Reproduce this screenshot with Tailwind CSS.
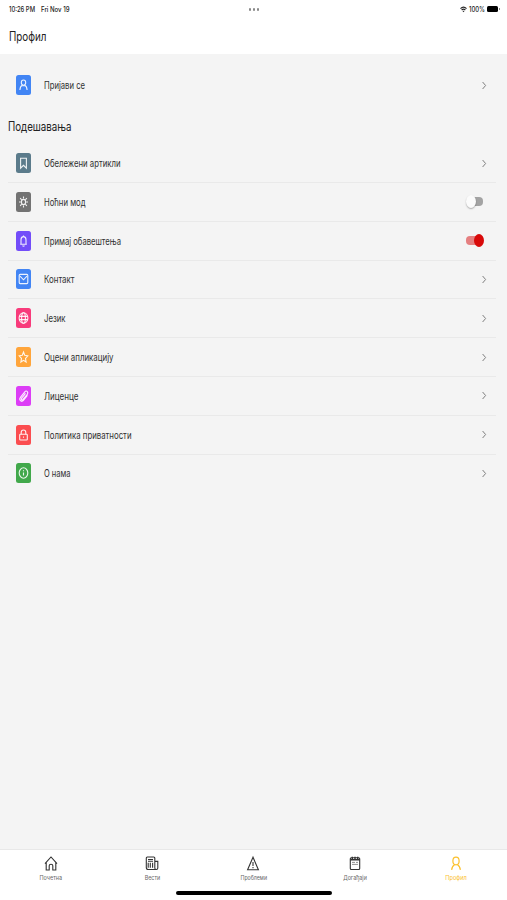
<!DOCTYPE html>
<html lang="sr">
<head>
<meta charset="utf-8">
<title>Профил</title>
<script src="https://cdn.jsdelivr.net/npm/@tailwindcss/browser@4"></script>
</head>
<body class="w-[507px] h-[900px] overflow-hidden bg-[#f4f4f4] font-['Inter','Roboto',sans-serif] text-[#303030] flex flex-col">
<header class="bg-white h-[54px] shrink-0">
  <div class="h-[18px] flex items-center text-[7.3px] font-medium text-[#222] pl-[9px] relative">
    <svg class="w-[32px] h-[12px] fill-current overflow-visible"><text y="8.7" textLength="26" lengthAdjust="spacingAndGlyphs">10:26 PM</text></svg>
    <svg class="w-[38px] h-[12px] fill-current overflow-visible"><text y="8.7" textLength="28.5" lengthAdjust="spacingAndGlyphs">Fri Nov 19</text></svg>
    <div class="absolute left-[248.5px] top-[8px] flex gap-[1.5px]"><i class="w-[2.5px] h-[3px] rounded-full bg-[#888]"></i><i class="w-[2.5px] h-[3px] rounded-full bg-[#888]"></i><i class="w-[2.5px] h-[3px] rounded-full bg-[#888]"></i></div>
    <div class="absolute left-[460px] top-0 h-[18px] flex items-center">
      <svg class="w-[7px] h-[7px]" viewBox="0 0 14 14" fill="none" stroke="#222" stroke-width="2.3"><path d="M1 5.2Q7-.8 13 5.2M3.3 8Q7 4.3 10.7 8"/><path d="M5 10.2Q7 8.5 9 10.2L7 12.5Z" fill="#222" stroke="none"/></svg>
      <svg class="w-[18px] h-[12px] ml-[2px] fill-current overflow-visible"><text y="8.7" textLength="16" lengthAdjust="spacingAndGlyphs">100%</text></svg>
      <i class="w-[11px] h-[6.5px] rounded-[1.5px] bg-black"></i><i class="w-px h-[2px] ml-[.5px] bg-[#888]"></i>
    </div>
  </div>
  <h1 class="pl-[9px] h-[36px] pt-[8px] text-[12.8px] text-[#222]"><svg class="w-[60px] h-[20px] fill-current overflow-visible"><text y="14.5" textLength="37.5" lengthAdjust="spacingAndGlyphs">Профил</text></svg></h1>
</header>
<main class="flex-1 pl-[8px] pr-[11px]">
  <div id="login" class="h-[51px] pt-[12.3px]"></div>
  <h2 class="h-[39.2px] pt-[11px] text-[12.8px] text-[#222]"><svg class="w-[90px] h-[20px] fill-current overflow-visible"><text y="14.9" textLength="63.5" lengthAdjust="spacingAndGlyphs">Подешавања</text></svg></h2>
  <div id="list"></div>
</main>
<nav class="h-[51px] shrink-0 bg-white border-t border-[#e8e8e8]">
  <div class="grid grid-cols-5 h-[36px] text-[6.4px] text-[#666]">
    <div class="flex flex-col items-center pt-[5px]"><svg class="w-[14px] h-[17px]" viewBox="0 0 14 17" fill="none" stroke="#333" stroke-width="1.1"><path d="M1 8.7L7 2l6 6.7M2.2 7.6V15h3v-4.3q0-1.5 1.8-1.5t1.8 1.5V15h3V7.6"/></svg><svg class="w-[23px] h-[10px] fill-current overflow-visible"><text x=".5" y="8.3" textLength="22.5" lengthAdjust="spacingAndGlyphs">Почетна</text></svg></div>
    <div class="flex flex-col items-center pt-[5px]"><svg class="w-[14px] h-[17px]" viewBox="0 0 14 17" fill="none" stroke="#333" stroke-width="1.1"><path d="M9.8 6.2V3q0-1-1-1H2.3q-1 0-1 1v9.5q0 2 2 2h8q1.5 0 1.5-1.5V6.4H9.8V13q0 1.5 1.5 1.5M3 4.5h5M3 6.2h5M3.2 7.7v5M5.3 7.7v5M7.6 7.7v5"/></svg><svg class="w-[16px] h-[10px] fill-current overflow-visible"><text x=".7" y="8.3" textLength="15.5" lengthAdjust="spacingAndGlyphs">Вести</text></svg></div>
    <div class="flex flex-col items-center pt-[5px]"><svg class="w-[14px] h-[17px]" viewBox="0 0 14 17" fill="none" stroke="#333" stroke-width="1.1"><path d="M7 2.2L1.6 14.8h10.8ZM7 7v4M7 12v1.2"/></svg><svg class="w-[27px] h-[10px] fill-current overflow-visible"><text x=".5" y="8.3" textLength="26.5" lengthAdjust="spacingAndGlyphs">Проблеми</text></svg></div>
    <div class="flex flex-col items-center pt-[5px]"><svg class="w-[14px] h-[17px]" viewBox="0 0 14 17" fill="none" stroke="#333" stroke-width="1.1"><rect x="2.3" y="2.7" width="9.4" height="11.8" rx="1"/><path d="M2.3 4.8h9.4M4.3 1.7v2.5M7 1.7v2.5M9.7 1.7v2.5" stroke-width="1.4"/><path d="M4 7.4h3M8 7.4h2M4 9.4h6" stroke="#777" stroke-width=".8"/></svg><svg class="w-[24px] h-[10px] fill-current overflow-visible"><text x=".3" y="8.3" textLength="23.5" lengthAdjust="spacingAndGlyphs">Догађаји</text></svg></div>
    <div class="flex flex-col items-center pt-[5px] text-[#fbc02d]"><svg class="w-[14px] h-[17px]" viewBox="0 0 14 17" fill="none" stroke="currentColor" stroke-width="1.2"><ellipse cx="7" cy="6" rx="3.1" ry="3.8"/><path d="M2.6 14.8q.6-4 3-5.1M11.4 14.8q-.6-4-3-5.1"/></svg><svg class="w-[22px] h-[10px] fill-current overflow-visible"><text x=".3" y="8.3" textLength="21.5" lengthAdjust="spacingAndGlyphs">Профил</text></svg></div>
  </div>
  <div class="mx-auto mt-[5px] w-[156px] h-[4px] rounded-full bg-black"></div>
</nav>
<script>
const icons = {
  user: '<ellipse cx="7.5" cy="7.6" rx="2.2" ry="2.6"/><path d="M3.9 15q.3-3.7 2.3-4.7M11.1 15q-.3-3.7-2.3-4.7M5.6 10.7h3.8"/>',
  mark: '<path d="M4.6 5.2h5.8v10L7.5 12.3 4.6 15.2Z"/>',
  sun: '<ellipse cx="7.5" cy="10" rx="2.1" ry="2.6"/><path d="M7.5 4.6v2M7.5 13.4v2M3 10h1.8M10.2 10H12M4.2 6l1.4 1.8M10.8 6L9.4 7.8M4.2 14l1.4-1.8M10.8 14l-1.4-1.8"/>',
  bell: '<path d="M4.2 13.2h6.6M5 13V8.8Q5 5.6 7.5 5.6T10 8.8V13M7.5 4.4v1.2M6.5 14.6q1 1.2 2 0"/>',
  mail: '<rect x="3.2" y="5.4" width="8.6" height="9.2" rx="1"/><path d="M4 7.2l3.5 3.6L11 7.2"/>',
  globe: '<ellipse cx="7.5" cy="10" rx="4.4" ry="5.3"/><ellipse cx="7.5" cy="10" rx="1.9" ry="5.3"/><path d="M3.3 8.4h8.4M3.3 11.6h8.4"/>',
  star: '<path d="M7.5 5l1.2 3.3 3.1.5-2.3 2.6.6 3.6-2.6-1.7L4.9 15l.6-3.6-2.3-2.6 3.1-.5Z"/>',
  clip: '<path d="M11.6 9.2l-4 5q-1.8 2-3.2.5t.2-3.6l4.2-5.2q1.4-1.5 2.5-.3t0 2.7L7 13.4q-1 1-1.5.3t.2-1.6L9.5 7.4M4.6 11l3.5-4.2"/>',
  lock: '<rect x="3.7" y="9.2" width="7.6" height="5.8" rx=".8"/><path d="M5.2 9.2V7.6q0-2.6 2.3-2.6t2.3 2.6v1.6M7.5 11.4v1.4"/>',
  info: '<ellipse cx="7.5" cy="10" rx="4.3" ry="5.2"/><path d="M7.5 9.4v3M7.5 7.2v1"/>'
};
const arrow = '<svg class="w-[6px] h-[9px] mr-[9px]" viewBox="0 0 6 9" fill="none" stroke="#808080" stroke-width="1"><path d="M1.6 1L4.6 4.5l-3 3.5"/></svg>';
const off = '<div class="relative w-[18px] h-[14px] mr-[12.5px]"><i class="absolute left-[3px] top-[2.5px] w-[14.5px] h-[9px] rounded-[4px] bg-[#a3a3a3]"></i><i class="absolute left-0 top-[.5px] w-[10px] h-[13px] rounded-[50%] bg-[#fbfbfb] shadow-[0_1px_1.5px_rgba(0,0,0,.3)]"></i></div>';
const on = '<div class="relative w-[18px] h-[14px] mr-[12px]"><i class="absolute left-0 top-[2.5px] w-[15px] h-[9px] rounded-[4px] bg-[#e57f80]"></i><i class="absolute left-[8px] top-[.5px] w-[10px] h-[13px] rounded-[50%] bg-[#d80909]"></i></div>';
const row = (icon, color, label, width, end, line) =>
  `<div class="h-[38.8px] flex items-center pl-[8px] border-b ${line ? 'border-[#e9e9e9]' : 'border-transparent'}">
    <svg class="w-[15px] h-[20px] shrink-0" viewBox="0 0 15 20" fill="none" stroke="#fff" stroke-opacity=".9" stroke-width="1.1"><rect width="15" height="20" rx="2.5" fill="${color}" stroke="none"/>${icons[icon]}</svg>
    <div class="flex-1 pl-[13px] text-[10.3px]"><svg class="w-[160px] h-[14px] fill-current overflow-visible"><text y="11" textLength="${width}" lengthAdjust="spacingAndGlyphs">${label}</text></svg></div>${end}</div>`;
document.getElementById('login').innerHTML = row('user', '#4285f4', 'Пријави се', 41, arrow, false);
document.getElementById('list').innerHTML = [
  ['mark', '#5b7b8b', 'Обележени артикли', 76.5, arrow, true],
  ['sun', '#737373', 'Ноћни мод', 41.5, off, true],
  ['bell', '#734df9', 'Примај обавештења', 77, on, true],
  ['mail', '#4285f4', 'Контакт', 30.5, arrow, true],
  ['globe', '#f83b7b', 'Језик', 21.5, arrow, true],
  ['star', '#ffa53b', 'Оцени апликацију', 69.5, arrow, true],
  ['clip', '#dc3df6', 'Лиценце', 34.5, arrow, true],
  ['lock', '#fb4d50', 'Политика приватности', 87.5, arrow, true],
  ['info', '#41a84b', 'О нама', 26.5, arrow, false]
].map(r => row(...r)).join('');
</script>
</body>
</html>
